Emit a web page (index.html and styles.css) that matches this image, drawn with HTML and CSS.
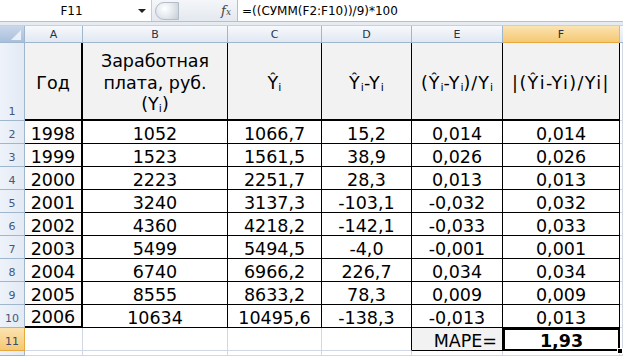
FILE: index.html
```html
<!DOCTYPE html>
<html>
<head>
<meta charset="utf-8">
<link rel="stylesheet" href="styles.css">
</head>
<body>
<div class="app">
  <div class="fbar">
    <div class="namebox"><span class="name">F11</span><span class="arrow"></span></div>
    <div class="fxzone"><span class="knob"></span><span class="fx">f<span class="fxs">x</span></span></div>
    <div class="formula">=((СУММ(F2:F10))/9)*100</div>
  </div>
  <div class="band"></div>
  <div class="sheet">
    <div class="corner"><span class="tri"></span></div>
    <div class="ch">A</div><div class="ch">B</div><div class="ch">C</div><div class="ch">D</div><div class="ch">E</div><div class="ch sel">F</div><div class="ch rest"></div>

    <div class="rh">1</div>
    <div class="c hd a"><span>Год</span></div>
    <div class="c hd"><span>Заработная<br>плата, руб.<br>(Y<sub>i</sub>)</span></div>
    <div class="c hd"><span>Ŷ<sub>i</sub></span></div>
    <div class="c hd"><span class="sp1">Ŷ<sub>i</sub>-Y<sub>i</sub></span></div>
    <div class="c hd"><span class="sp1">(Ŷ<sub>i</sub>-Y<sub>i</sub>)/Y<sub>i</sub></span></div>
    <div class="c hd"><span class="sp2">|(Ŷi-Yi)/Yi|</span></div>
    <div class="g"></div>

    <div class="rh">2</div><div class="c a">1998</div><div class="c">1052</div><div class="c">1066,7</div><div class="c">15,2</div><div class="c">0,014</div><div class="c">0,014</div><div class="g"></div>
    <div class="rh">3</div><div class="c a">1999</div><div class="c">1523</div><div class="c">1561,5</div><div class="c">38,9</div><div class="c">0,026</div><div class="c">0,026</div><div class="g"></div>
    <div class="rh">4</div><div class="c a">2000</div><div class="c">2223</div><div class="c">2251,7</div><div class="c">28,3</div><div class="c">0,013</div><div class="c">0,013</div><div class="g"></div>
    <div class="rh">5</div><div class="c a">2001</div><div class="c">3240</div><div class="c">3137,3</div><div class="c">-103,1</div><div class="c">-0,032</div><div class="c">0,032</div><div class="g"></div>
    <div class="rh">6</div><div class="c a">2002</div><div class="c">4360</div><div class="c">4218,2</div><div class="c">-142,1</div><div class="c">-0,033</div><div class="c">0,033</div><div class="g"></div>
    <div class="rh">7</div><div class="c a">2003</div><div class="c">5499</div><div class="c">5494,5</div><div class="c">-4,0</div><div class="c">-0,001</div><div class="c">0,001</div><div class="g"></div>
    <div class="rh">8</div><div class="c a">2004</div><div class="c">6740</div><div class="c">6966,2</div><div class="c">226,7</div><div class="c">0,034</div><div class="c">0,034</div><div class="g"></div>
    <div class="rh">9</div><div class="c a">2005</div><div class="c">8555</div><div class="c">8633,2</div><div class="c">78,3</div><div class="c">0,009</div><div class="c">0,009</div><div class="g"></div>
    <div class="rh">10</div><div class="c a last">2006</div><div class="c">10634</div><div class="c">10495,6</div><div class="c">-138,3</div><div class="c">-0,013</div><div class="c">0,013</div><div class="g"></div>

    <div class="rh sel">11</div><div class="g"></div><div class="g"></div><div class="g"></div><div class="g dr"></div><div class="c mape">MAPE=</div><div class="c res"><b>1,93</b><span class="handle"></span></div><div class="g"></div>

    <div class="rh"></div><div class="g"></div><div class="g"></div><div class="g"></div><div class="g"></div><div class="g"></div><div class="g"></div><div class="g"></div>
  </div>
</div>
</body>
</html>
```
FILE: styles.css
```css
* { box-sizing: border-box; }
html, body { margin: 0; padding: 0; background: #fff; }
.app { width: 623px; height: 357px; overflow: hidden; font-family: "DejaVu Sans", Verdana, sans-serif; }

.fbar { display: flex; height: 22px; background: #fff; border-bottom: 1px solid #b7c1cd; }
.namebox { width: 152px; display: flex; align-items: center; position: relative; border-right: 1px solid #c5ccd6; }
.name { flex: 1; text-align: center; font-size: 12px; color: #000; padding-left: 6px; padding-right: 14px; }
.arrow { position: absolute; right: 5px; top: 9px; width: 0; height: 0; border-left: 4px solid transparent; border-right: 4px solid transparent; border-top: 4px solid #222; }
.fxzone { width: 86px; display: flex; align-items: center; justify-content: space-between; padding: 1px 6px 1px 3px; background: linear-gradient(#f4f6f9, #e4e9ef); border-right: 1px solid #b5bfcb; }
.knob { width: 24px; height: 18px; border-radius: 9px 0 0 9px; background: radial-gradient(circle at 40% 35%, #ffffff 0%, #e7ebf0 45%, #c4ccd6 100%); border: 1px solid #b3bcc8; }
.fx { font-family: "DejaVu Serif", "Liberation Serif", serif; font-style: italic; font-size: 13px; color: #444; }
.fxs { font-size: 9px; }
.formula { flex: 1; font-size: 12px; padding-left: 4px; display: flex; align-items: center; color: #000; }
.band { height: 4px; background: #e6ebf2; border-bottom: 1px solid #c7d1de; }

.sheet { display: grid; grid-template-columns: 25px 58px 145px 94px 90px 91px 117px 1fr; grid-template-rows: 17px 78px repeat(10, 23px) 1fr; height: 330px; }
.corner { background: linear-gradient(#c9d7ea, #a9bfdc); border-right: 1px solid #9eb6ce; border-bottom: 1px solid #9eb6ce; position: relative; }
.tri { position: absolute; right: 3px; bottom: 2px; width: 0; height: 0; border-left: 10px solid transparent; border-bottom: 10px solid #e9f0f8; }
.ch { background: linear-gradient(#f7f9fc, #e1e8f2); border-right: 1px solid #9eb6ce; border-bottom: 1px solid #9eb6ce; font-size: 11px; color: #26334a; display: flex; align-items: center; justify-content: center; }
.ch.sel { background: linear-gradient(#fbe3b1, #f5c873); border-right-color: #f2b54f; border-bottom-color: #e8a83e; }
.ch.rest { border-right: none; }
.rh { background: linear-gradient(90deg, #eef3fa, #e3eaf4); border-right: 1px solid #9eb6ce; border-bottom: 1px solid #9eb6ce; font-size: 11px; color: #46577a; display: flex; align-items: flex-end; justify-content: center; padding-bottom: 2px; }
.rh.sel { background: linear-gradient(#fbe3b1, #f5c873); border-bottom-color: #e8a83e; border-right-color: #e8a83e; color: #3d4a66; }

.c { border-right: 1px solid #000; border-bottom: 1px solid #000; font-size: 17.5px; line-height: 17px; color: #000; display: flex; align-items: flex-end; justify-content: center; padding-bottom: 0; white-space: nowrap; }
.c.a { border-right: 2px solid #000; background: #fdfcfa; }
.c.a.last { border-bottom: 2px solid #000; }
.c.hd { background: #f2f2f2; border-bottom: 2px solid #000; align-items: center; text-align: center; line-height: 21.7px; padding-top: 5px; padding-bottom: 0; }
.sp1 { letter-spacing: 1px; }
.sp2 { letter-spacing: 1.4px; }
.c sub { font-size: 11px; vertical-align: -2px; line-height: 0; letter-spacing: 0; }
.g { border-right: 1px solid #d0d7e5; border-bottom: 1px solid #d0d7e5; }
.g.dr { border-right-color: #000; }
.c.mape { background: #f2f2f2; justify-content: flex-end; padding-right: 5px; }
.c.res { position: relative; outline: 2px solid #000; outline-offset: -2px; border: 1px solid #777; }
.c.res b { font-weight: bold; }
.handle { position: absolute; right: -4px; bottom: -4px; width: 6px; height: 6px; background: #000; border: 1px solid #fff; }
```
